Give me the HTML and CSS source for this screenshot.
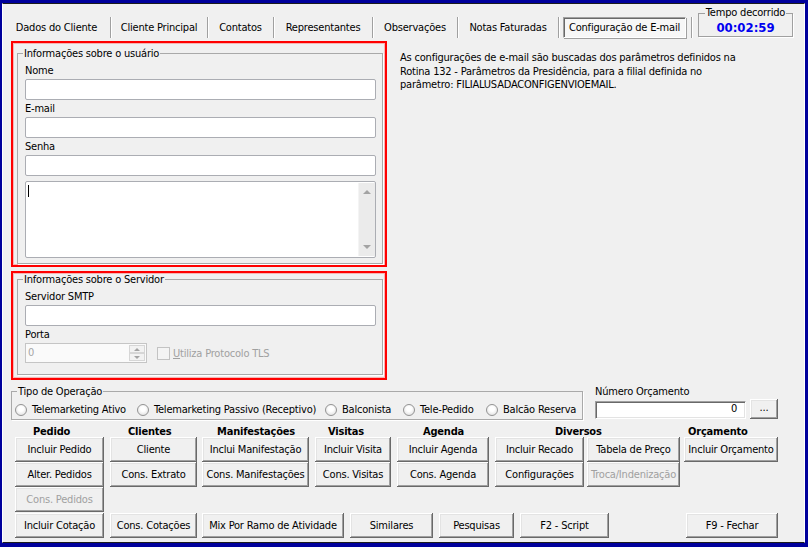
FILE: index.html
```html
<!DOCTYPE html>
<html lang="pt-BR">

<head>
  <meta charset="UTF-8">
  <title>Configuração de E-mail</title>
  <link rel="stylesheet" href="styles.css">
</head>

<body>
  <div class="window">
    <header class="top">
      <nav class="tabs">
        <span class="tab">Dados do Cliente</span>
        <span class="tab">Cliente Principal</span>
        <span class="tab">Contatos</span>
        <span class="tab">Representantes</span>
        <span class="tab">Observações</span>
        <span class="tab">Notas Faturadas</span>
        <span class="tab-active">Configuração de E-mail</span>
        <span class="tab-sep"></span>
      </nav>
      <fieldset class="timer">
        <legend>Tempo decorrido</legend>
        <div class="timer-value">00:02:59</div>
      </fieldset>
    </header>

    <section class="main">
      <div class="left">
        <div class="mark mark-user">
          <fieldset class="group">
            <legend>Informações sobre o usuário</legend>
            <label class="field-label">Nome</label>
            <div class="input"></div>
            <label class="field-label">E-mail</label>
            <div class="input"></div>
            <label class="field-label">Senha</label>
            <div class="input"></div>
            <div class="memo">
              <div class="memo-text"><span class="caret"></span></div>
              <div class="vscroll">
                <span class="arrow-up"></span>
                <span class="arrow-down"></span>
              </div>
            </div>
          </fieldset>
        </div>
        <div class="mark mark-server">
          <fieldset class="group group-server">
            <legend>Informações sobre o Servidor</legend>
            <label class="field-label">Servidor SMTP</label>
            <div class="input"></div>
            <label class="field-label">Porta</label>
            <div class="spin-row">
              <div class="spin">
                <span class="spin-value">0</span>
                <span class="spin-btns">
                  <span class="spin-btn"><span class="arrow-up small"></span></span>
                  <span class="spin-btn"><span class="arrow-down small"></span></span>
                </span>
              </div>
              <span class="check"></span>
              <span class="check-label"><u>U</u>tiliza Protocolo TLS</span>
            </div>
          </fieldset>
        </div>
      </div>
      <p class="note">
        As configurações de e-mail são buscadas dos parâmetros definidos na<br>
        Rotina 132 - Parâmetros da Presidência, para a filial definida no<br>
        parâmetro: FILIALUSADACONFIGENVIOEMAIL.
      </p>
    </section>

    <section class="operation">
      <fieldset class="op-type">
        <legend>Tipo de Operação</legend>
        <div class="radios">
          <span class="radio"><span class="radio-dot"></span>Telemarketing Ativo</span>
          <span class="radio"><span class="radio-dot"></span>Telemarketing Passivo (Receptivo)</span>
          <span class="radio"><span class="radio-dot"></span>Balconista</span>
          <span class="radio"><span class="radio-dot"></span>Tele-Pedido</span>
          <span class="radio"><span class="radio-dot"></span>Balcão Reserva</span>
        </div>
      </fieldset>
      <div class="budget">
        <div class="budget-label">Número Orçamento</div>
        <div class="budget-row">
          <div class="budget-input">0</div>
          <button class="btn dots-btn">...</button>
        </div>
      </div>
    </section>

    <section class="actions">
      <div class="col col-pedido">
        <div class="col-head">Pedido</div>
        <button class="btn">Incluir Pedido</button>
        <button class="btn">Alter. Pedidos</button>
        <button class="btn btn-off">Cons. Pedidos</button>
      </div>
      <div class="col col-clientes">
        <div class="col-head">Clientes</div>
        <button class="btn">Cliente</button>
        <button class="btn">Cons. Extrato</button>
      </div>
      <div class="col col-manif">
        <div class="col-head">Manifestações</div>
        <button class="btn">Inclui Manifestação</button>
        <button class="btn">Cons. Manifestações</button>
      </div>
      <div class="col col-visitas">
        <div class="col-head">Visitas</div>
        <button class="btn">Incluir Visita</button>
        <button class="btn">Cons. Visitas</button>
      </div>
      <div class="col col-agenda">
        <div class="col-head">Agenda</div>
        <button class="btn">Incluir Agenda</button>
        <button class="btn">Cons. Agenda</button>
      </div>
      <div class="col col-diversos">
        <div class="col-head">Diversos</div>
        <div class="pair">
          <div class="col col-div-a">
            <button class="btn">Incluir Recado</button>
            <button class="btn">Configurações</button>
          </div>
          <div class="col col-div-b">
            <button class="btn">Tabela de Preço</button>
            <button class="btn btn-off">Troca/Indenização</button>
          </div>
        </div>
      </div>
      <div class="col col-orc">
        <div class="col-head">Orçamento</div>
        <button class="btn">Incluir Orçamento</button>
      </div>
    </section>

    <section class="footer">
      <button class="btn">Incluir Cotação</button>
      <button class="btn">Cons. Cotações</button>
      <button class="btn">Mix Por Ramo de Atividade</button>
      <button class="btn">Similares</button>
      <button class="btn">Pesquisas</button>
      <button class="btn">F2 - Script</button>
      <button class="btn">F9 - Fechar</button>
    </section>
  </div>
</body>

</html>
```

FILE: styles.css
```css
html {
  box-sizing: border-box;
  font-family: "DejaVu Sans Condensed", "DejaVu Sans", sans-serif;
  font-stretch: condensed;
  font-size: 11px;
  letter-spacing: -0.2px;
  color: #000;
}

*,
*:after,
*:before {
  box-sizing: inherit;
}

body {
  margin: 0;
  height: 547px;
  padding: 3px 3px 4px 2px;
  display: flex;
  background-color: #00009c;
}

.window {
  flex: 1;
  display: flex;
  flex-direction: column;
  background-color: #f0f0f0;
  border-top: 1px solid #1c1c1c;
  border-bottom: 1px solid #1c1c1c;
  border-left: 1px solid #fff;
  border-right: 1px solid #fff;
}

/* abas */
.top {
  display: flex;
  align-items: flex-start;
  height: 37px;
}

.tabs {
  display: flex;
  margin-top: 13px;
}

.tab {
  height: 21px;
  line-height: 21px;
  text-align: center;
  white-space: nowrap;
  border-right: 1px solid #a0a0a0;
  box-shadow: 1px 0 #fff;
}

.tab:nth-child(1) { width: 108px; }
.tab:nth-child(2) { width: 97px; }
.tab:nth-child(3) { width: 66px; }
.tab:nth-child(4) { width: 99px; }
.tab:nth-child(5) { width: 85px; }
.tab:nth-child(6) { width: 101px; }

.tab-active {
  width: 123px;
  height: 21px;
  margin-left: 4px;
  line-height: 19px;
  text-align: center;
  white-space: nowrap;
  background-color: #f7f7f7;
  border: 1px solid #a0a0a0;
  border-right-color: #fff;
  border-bottom-color: #fff;
  box-shadow: inset 1px 1px #696969, 1px 1px #a0a0a0;
}

.tab-sep {
  width: 1px;
  height: 21px;
  margin-left: 5px;
  background-color: #a0a0a0;
  box-shadow: 1px 0 #fff;
}

.timer {
  width: 95px;
  margin: 3px 0 0 6px;
  padding: 2px 0 1px;
  min-inline-size: 0;
  border: 1px solid #a0a0a0;
  box-shadow: 1px 1px #fff;
}

.timer legend {
  margin: 0 auto;
  padding: 0 1px;
  line-height: 12px;
}

.timer-value {
  font-size: 13px;
  font-weight: bold;
  line-height: 14px;
  letter-spacing: 0;
  text-align: center;
  color: #0000f0;
}

/* configuração */
.main {
  display: flex;
  align-items: flex-start;
  margin-left: 8px;
}

.left {
  width: 376px;
}

.mark {
  border: 2px solid #ff0000;
  box-shadow: inset 0 0 0 1px #f7b4b4;
}

.mark-user {
  padding: 4px 2px 1px 4px;
}

.mark-server {
  margin-top: 4px;
  padding: 0 2px 3px 4px;
}

.group {
  margin: 0;
  padding: 4px 6px 5px 7px;
  min-inline-size: 0;
  border: 1px solid #a9a9a9;
  box-shadow: 1px 1px #fff;
}

.group-server {
  padding-bottom: 11px;
}

.group legend {
  margin-left: -2px;
  padding: 0 1px;
  line-height: 13px;
}

.field-label {
  display: block;
  line-height: 14px;
}

.input {
  height: 21px;
  margin: 1px 0 2px;
  background-color: #fff;
  border: 1px solid #abadb3;
  border-radius: 2px;
}

.memo {
  display: flex;
  height: 77px;
  margin-top: 5px;
  background-color: #fff;
  border: 1px solid #abadb3;
  border-radius: 2px;
}

.memo-text {
  flex: 1;
  padding: 3px 2px;
}

.caret {
  display: block;
  width: 1px;
  height: 12px;
  background-color: #000;
}

.vscroll {
  width: 17px;
  margin: 1px 0;
  padding: 7px 0;
  display: flex;
  flex-direction: column;
  justify-content: space-between;
  align-items: center;
  background-color: #ebebeb;
  border-left: 1px solid #f4f4f4;
}

.arrow-up,
.arrow-down {
  width: 0;
  height: 0;
  border-left: 4px solid transparent;
  border-right: 4px solid transparent;
}

.arrow-up {
  border-bottom: 4px solid #a3a3a3;
}

.arrow-down {
  border-top: 4px solid #a3a3a3;
}

.arrow-up.small,
.arrow-down.small {
  border-left-width: 3px;
  border-right-width: 3px;
  border-top-width: 3px;
  border-bottom-width: 3px;
}

.arrow-up.small {
  border-top: 0;
}

.arrow-down.small {
  border-bottom: 0;
}

.spin-row {
  display: flex;
  align-items: center;
  margin-top: 1px;
}

.spin {
  display: flex;
  width: 122px;
  height: 20px;
  background-color: #fafafa;
  border: 1px solid #c5c5c5;
}

.spin-value {
  flex: 1;
  padding-left: 2px;
  line-height: 18px;
  color: #a6a6a6;
}

.spin-btns {
  display: flex;
  flex-direction: column;
  width: 17px;
  padding: 1px 1px 1px 0;
}

.spin-btn {
  flex: 1;
  display: flex;
  align-items: center;
  justify-content: center;
  background-color: #f2f2f2;
  border: 1px solid #d6d6d6;
}

.check {
  width: 13px;
  height: 13px;
  margin-left: 10px;
  background-color: #f4f4f4;
  border: 1px solid #c3c3c3;
}

.check-label {
  margin-left: 3px;
  color: #a0a0a0;
}

.note {
  margin: 10px 0 0 13px;
  line-height: 13.5px;
  white-space: nowrap;
}

/* tipo de operação */
.operation {
  display: flex;
  align-items: flex-start;
  margin: 5px 0 0 8px;
}

.op-type {
  width: 572px;
  margin: 0;
  padding: 5px 0 3px 3px;
  min-inline-size: 0;
  border: 1px solid #a9a9a9;
  box-shadow: 1px 1px #fff;
}

.op-type legend {
  margin-left: 2px;
  padding: 0 1px;
  line-height: 13px;
}

.radios {
  display: flex;
  line-height: 13px;
}

.radio {
  display: flex;
  align-items: center;
  white-space: nowrap;
}

.radio:nth-child(1) { width: 122px; }
.radio:nth-child(2) { width: 188px; }
.radio:nth-child(3) { width: 78px; }
.radio:nth-child(4) { width: 83px; }

.radio-dot {
  width: 12px;
  height: 12px;
  margin-right: 5px;
  border-radius: 50%;
  border: 1px solid #939393;
  background: radial-gradient(circle at 50% 40%, #fff 30%, #d8d8d8);
}

.budget {
  margin-left: 12px;
}

.budget-label {
  line-height: 13px;
}

.budget-row {
  display: flex;
  align-items: flex-end;
  margin-top: 1px;
}

.budget-input {
  width: 151px;
  height: 18px;
  padding-right: 8px;
  line-height: 14px;
  text-align: right;
  background-color: #fff;
  border: 1px solid;
  border-color: #a0a0a0 #fff #fff #a0a0a0;
  box-shadow: inset 1px 1px #696969, inset -1px -1px #e3e3e3;
}

/* botões */
.btn {
  display: flex;
  align-items: center;
  justify-content: center;
  height: 25px;
  padding: 0 2px;
  margin: 0;
  overflow: hidden;
  white-space: nowrap;
  font: inherit;
  letter-spacing: inherit;
  color: #000;
  background-color: #f0f0f0;
  border: 0;
  box-shadow: inset -1px -1px #696969, inset 1px 1px #fff, inset -2px -2px #a0a0a0, inset 2px 2px #e3e3e3;
}

.btn-off {
  color: #a0a0a0;
}

.dots-btn {
  width: 28px;
  height: 20px;
  margin-left: 4px;
  padding-bottom: 4px;
}

.actions {
  display: flex;
  margin: 5px 0 0 12px;
}

.col {
  display: flex;
  flex-direction: column;
}

.col-head {
  height: 12px;
  line-height: 14px;
  font-weight: bold;
  white-space: nowrap;
}

.col-pedido { width: 89px; }
.col-clientes { width: 87px; margin-left: 6px; }
.col-manif { width: 107px; margin-left: 5px; }
.col-visitas { width: 76px; margin-left: 6px; }
.col-agenda { width: 92px; margin-left: 6px; }
.col-diversos { margin-left: 6px; }
.col-div-a { width: 89px; }
.col-div-b { width: 93px; margin-left: 3px; }
.col-orc { width: 94px; margin-left: 4px; }

.col-pedido .col-head { padding-left: 18px; }
.col-clientes .col-head { padding-left: 18px; }
.col-manif .col-head { padding-left: 15px; }
.col-visitas .col-head { padding-left: 13px; }
.col-agenda .col-head { padding-left: 26px; }
.col-diversos .col-head { padding-left: 60px; }
.col-orc .col-head { padding-left: 4px; }

.pair {
  display: flex;
}

.footer {
  display: flex;
  margin: 1px 0 0 12px;
}

.footer .btn:nth-child(1) { width: 89px; }
.footer .btn:nth-child(2) { width: 87px; margin-left: 6px; }
.footer .btn:nth-child(3) { width: 142px; margin-left: 5px; }
.footer .btn:nth-child(4) { width: 83px; margin-left: 6px; }
.footer .btn:nth-child(5) { width: 75px; margin-left: 6px; }
.footer .btn:nth-child(6) { width: 89px; margin-left: 6px; }
.footer .btn:nth-child(7) { width: 92px; margin-left: 77px; }
```
